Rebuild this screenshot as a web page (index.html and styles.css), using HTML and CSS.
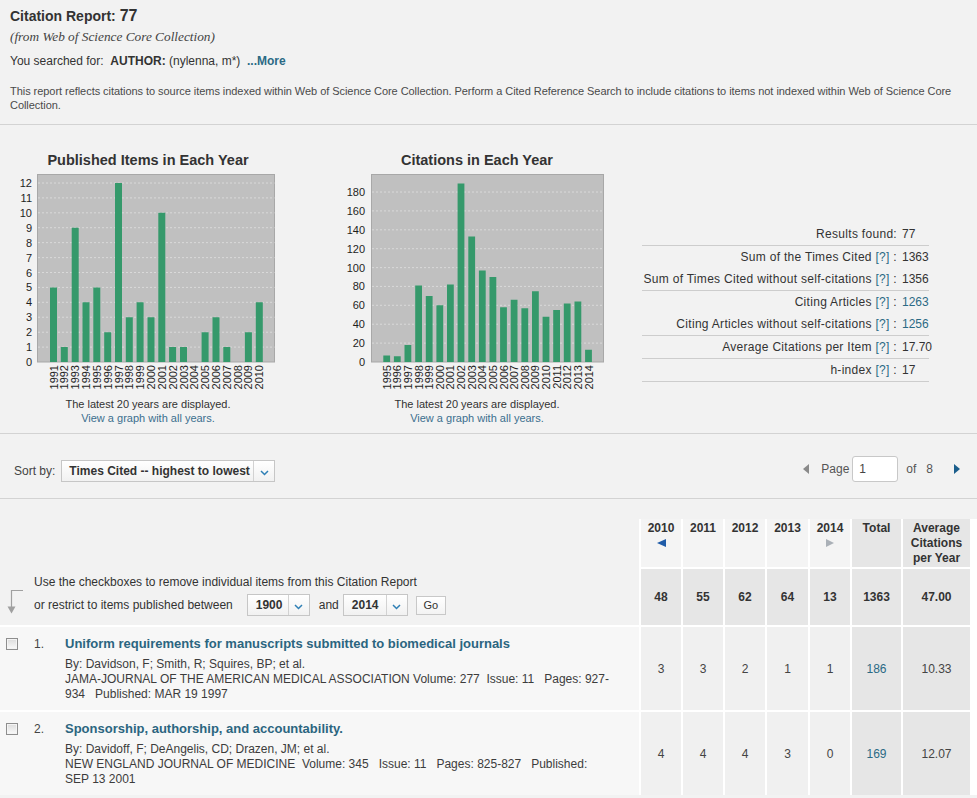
FILE: index.html
```html
<!DOCTYPE html>
<html lang="en">
<head>
<meta charset="utf-8">
<title>Citation Report</title>
<link rel="stylesheet" href="styles.css">
</head>
<body>
<div class="header">
  <h1 class="title">Citation Report: <span class="count">77</span></h1>
  <div class="source">(from Web of Science Core Collection)</div>
  <div class="searched">You searched for:&nbsp; <b>AUTHOR:</b> (nylenna, m*)&nbsp; <a class="more">...More</a></div>
  <p class="desc">This report reflects citations to source items indexed within Web of Science Core Collection. Perform a Cited Reference Search to include citations to items not indexed within Web of Science Core Collection.</p>
</div>

<div class="charts">
  <div class="chart">
    <div class="chart-title">Published Items in Each Year</div>
    <svg class="plot" width="296" height="226" viewBox="0 0 296 226">
      <rect x="37.5" y="6.5" width="237" height="187.5" fill="#c0c0c0" stroke="#a8a8a8"/>
      <path d="M38 179.1H274.5M38 164.2H274.5M38 149.2H274.5M38 134.3H274.5M38 119.4H274.5M38 104.5H274.5M38 89.6H274.5M38 74.6H274.5M38 59.7H274.5M38 44.8H274.5M38 29.9H274.5M38 15H274.5" stroke="#d9d9d9" stroke-dasharray="2 2"/>
      <path fill="#35996b" d="M50 194v-74.6h7v74.6zM60.8 194v-14.9h7v14.9zM71.7 194v-134.3h7v134.3zM82.5 194v-59.7h7v59.7zM93.3 194v-74.6h7v74.6zM104.2 194v-29.8h7v29.8zM115 194v-179h7v179zM125.8 194v-44.8h7v44.8zM136.6 194v-59.7h7v59.7zM147.5 194v-44.8h7v44.8zM158.3 194v-149.2h7v149.2zM169.1 194v-14.9h7v14.9zM180 194v-14.9h7v14.9zM201.6 194v-29.8h7v29.8zM212.5 194v-44.8h7v44.8zM223.3 194v-14.9h7v14.9zM244.9 194v-29.8h7v29.8zM255.8 194v-59.7h7v59.7z"/>
      <g class="ylab" text-anchor="end">
        <text x="32" y="198">0</text><text x="32" y="183.1">1</text><text x="32" y="168.2">2</text><text x="32" y="153.2">3</text><text x="32" y="138.3">4</text><text x="32" y="123.4">5</text><text x="32" y="108.5">6</text><text x="32" y="93.6">7</text><text x="32" y="78.6">8</text><text x="32" y="63.7">9</text><text x="32" y="48.8">10</text><text x="32" y="33.9">11</text><text x="32" y="19">12</text>
      </g>
      <g class="xlab" text-anchor="end">
        <text transform="translate(57.5 197) rotate(-90)">1991</text>
        <text transform="translate(68.3 197) rotate(-90)">1992</text>
        <text transform="translate(79.2 197) rotate(-90)">1993</text>
        <text transform="translate(90 197) rotate(-90)">1994</text>
        <text transform="translate(100.8 197) rotate(-90)">1995</text>
        <text transform="translate(111.7 197) rotate(-90)">1996</text>
        <text transform="translate(122.5 197) rotate(-90)">1997</text>
        <text transform="translate(133.3 197) rotate(-90)">1998</text>
        <text transform="translate(144.1 197) rotate(-90)">1999</text>
        <text transform="translate(155 197) rotate(-90)">2000</text>
        <text transform="translate(165.8 197) rotate(-90)">2001</text>
        <text transform="translate(176.6 197) rotate(-90)">2002</text>
        <text transform="translate(187.5 197) rotate(-90)">2003</text>
        <text transform="translate(198.3 197) rotate(-90)">2004</text>
        <text transform="translate(209.1 197) rotate(-90)">2005</text>
        <text transform="translate(220 197) rotate(-90)">2006</text>
        <text transform="translate(230.8 197) rotate(-90)">2007</text>
        <text transform="translate(241.6 197) rotate(-90)">2008</text>
        <text transform="translate(252.4 197) rotate(-90)">2009</text>
        <text transform="translate(263.3 197) rotate(-90)">2010</text>
      </g>
    </svg>
    <div class="caption">The latest 20 years are displayed.</div>
    <a class="caption-link">View a graph with all years.</a>
  </div>

  <div class="chart">
    <div class="chart-title">Citations in Each Year</div>
    <svg class="plot" width="296" height="226" viewBox="0 0 296 226">
      <rect x="42.5" y="6.5" width="232" height="187.5" fill="#c0c0c0" stroke="#a8a8a8"/>
      <path d="M43 175.1H274.5M43 156.2H274.5M43 137.3H274.5M43 118.4H274.5M43 99.6H274.5M43 80.7H274.5M43 61.8H274.5M43 42.9H274.5M43 24H274.5" stroke="#d9d9d9" stroke-dasharray="2 2"/>
      <path fill="#35996b" d="M54.3 194v-6.6h6.8v6.6zM64.9 194v-5.7h6.8v5.7zM75.5 194v-17h6.8v17zM86.2 194v-76.5h6.8v76.5zM96.8 194v-66.1h6.8v66.1zM107.4 194v-56.7h6.8v56.7zM118 194v-77.4h6.8v77.4zM128.6 194v-178.5h6.8v178.5zM139.3 194v-125.6h6.8v125.6zM149.9 194v-91.6h6.8v91.6zM160.5 194v-85h6.8v85zM171.1 194v-54.8h6.8v54.8zM181.7 194v-62.3h6.8v62.3zM192.4 194v-53.8h6.8v53.8zM203 194v-70.8h6.8v70.8zM213.6 194v-45.3h6.8v45.3zM224.2 194v-51.9h6.8v51.9zM234.8 194v-58.6h6.8v58.6zM245.5 194v-60.4h6.8v60.4zM256.1 194v-12.3h6.8v12.3z"/>
      <g class="ylab" text-anchor="end">
        <text x="36" y="198">0</text><text x="36" y="179.1">20</text><text x="36" y="160.2">40</text><text x="36" y="141.3">60</text><text x="36" y="122.4">80</text><text x="36" y="103.6">100</text><text x="36" y="84.7">120</text><text x="36" y="65.8">140</text><text x="36" y="46.9">160</text><text x="36" y="28">180</text>
      </g>
      <g class="xlab" text-anchor="end">
        <text transform="translate(61.7 197) rotate(-90)">1995</text>
        <text transform="translate(72.3 197) rotate(-90)">1996</text>
        <text transform="translate(82.9 197) rotate(-90)">1997</text>
        <text transform="translate(93.6 197) rotate(-90)">1998</text>
        <text transform="translate(104.2 197) rotate(-90)">1999</text>
        <text transform="translate(114.8 197) rotate(-90)">2000</text>
        <text transform="translate(125.4 197) rotate(-90)">2001</text>
        <text transform="translate(136 197) rotate(-90)">2002</text>
        <text transform="translate(146.7 197) rotate(-90)">2003</text>
        <text transform="translate(157.3 197) rotate(-90)">2004</text>
        <text transform="translate(167.9 197) rotate(-90)">2005</text>
        <text transform="translate(178.5 197) rotate(-90)">2006</text>
        <text transform="translate(189.1 197) rotate(-90)">2007</text>
        <text transform="translate(199.8 197) rotate(-90)">2008</text>
        <text transform="translate(210.4 197) rotate(-90)">2009</text>
        <text transform="translate(221 197) rotate(-90)">2010</text>
        <text transform="translate(231.6 197) rotate(-90)">2011</text>
        <text transform="translate(242.2 197) rotate(-90)">2012</text>
        <text transform="translate(252.9 197) rotate(-90)">2013</text>
        <text transform="translate(263.5 197) rotate(-90)">2014</text>
      </g>
    </svg>
    <div class="caption">The latest 20 years are displayed.</div>
    <a class="caption-link">View a graph with all years.</a>
  </div>

  <div class="stats">
    <div class="grp">
      <div class="srow"><span class="lbl">Results found:</span><span class="num">77</span></div>
    </div>
    <div class="grp">
      <div class="srow"><span class="lbl">Sum of the Times Cited <a>[?]</a> :</span><span class="num">1363</span></div>
      <div class="srow"><span class="lbl">Sum of Times Cited without self-citations <a>[?]</a> :</span><span class="num">1356</span></div>
    </div>
    <div class="grp">
      <div class="srow"><span class="lbl">Citing Articles <a>[?]</a> :</span><a class="num">1263</a></div>
      <div class="srow"><span class="lbl">Citing Articles without self-citations <a>[?]</a> :</span><a class="num">1256</a></div>
    </div>
    <div class="grp">
      <div class="srow"><span class="lbl">Average Citations per Item <a>[?]</a> :</span><span class="num">17.70</span></div>
    </div>
    <div class="grp">
      <div class="srow"><span class="lbl">h-index <a>[?]</a> :</span><span class="num">17</span></div>
    </div>
  </div>
</div>

<div class="sortbar">
  <span class="sort-label">Sort by:</span>
  <div class="select sort-select">
    <span class="sel-text">Times Cited -- highest to lowest</span>
    <span class="sel-btn"><svg width="9" height="6" viewBox="0 0 9 6"><path d="M1 1l3.5 3.5L8 1" fill="none" stroke="#2e7fb5" stroke-width="1.5"/></svg></span>
  </div>
  <div class="pager">
    <span class="tri-left"></span>
    <span class="page-lbl">Page</span>
    <span class="page-input">1</span>
    <span class="page-of">of&nbsp;&nbsp; 8</span>
    <span class="tri-right"></span>
  </div>
</div>

<div class="report">
  <div class="filter">
    <svg class="down-arrow" width="22" height="28" viewBox="0 0 22 28"><path d="M20 2.5H8.5V19" fill="none" stroke="#a0a0a0" stroke-width="1.2"/><path d="M4.5 18.5h8l-4 7z" fill="#a0a0a0"/></svg>
    <div class="filter-text">
      <div class="filter-line">Use the checkboxes to remove individual items from this Citation Report</div>
      <div class="filter-line restrict">or restrict to items published between
        <span class="select yr-select one"><span class="sel-text">1900</span><span class="sel-btn"><svg width="9" height="6" viewBox="0 0 9 6"><path d="M1 1l3.5 3.5L8 1" fill="none" stroke="#2e7fb5" stroke-width="1.5"/></svg></span></span>
        <span class="and">and</span>
        <span class="select yr-select two"><span class="sel-text">2014</span><span class="sel-btn"><svg width="9" height="6" viewBox="0 0 9 6"><path d="M1 1l3.5 3.5L8 1" fill="none" stroke="#2e7fb5" stroke-width="1.5"/></svg></span></span>
        <span class="go">Go</span>
      </div>
    </div>
  </div>
  <div class="yh">2010<span class="arr-left"></span></div>
  <div class="yh">2011</div>
  <div class="yh">2012</div>
  <div class="yh">2013</div>
  <div class="yh">2014<span class="arr-right"></span></div>
  <div class="yh dark">Total</div>
  <div class="yh dark">Average Citations per Year</div>

  <div class="tot">48</div>
  <div class="tot">55</div>
  <div class="tot">62</div>
  <div class="tot">64</div>
  <div class="tot">13</div>
  <div class="tot">1363</div>
  <div class="tot">47.00</div>

  <div class="item">
    <span class="cbox"></span>
    <span class="inum">1.</span>
    <div class="ibody">
      <a class="ititle">Uniform requirements for manuscripts submitted to biomedical journals</a>
      <div class="iline">By: Davidson, F; Smith, R; Squires, BP; et al.</div>
      <div class="iline">JAMA-JOURNAL OF THE AMERICAN MEDICAL ASSOCIATION Volume: 277&nbsp; Issue: 11&nbsp;&nbsp; Pages: 927-<wbr>934&nbsp;&nbsp; Published: MAR 19 1997</div>
    </div>
  </div>
  <div class="cell">3</div>
  <div class="cell">3</div>
  <div class="cell">2</div>
  <div class="cell">1</div>
  <div class="cell">1</div>
  <div class="cell dark"><a>186</a></div>
  <div class="cell dark">10.33</div>

  <div class="item">
    <span class="cbox"></span>
    <span class="inum">2.</span>
    <div class="ibody">
      <a class="ititle">Sponsorship, authorship, and accountability.</a>
      <div class="iline">By: Davidoff, F; DeAngelis, CD; Drazen, JM; et al.</div>
      <div class="iline">NEW ENGLAND JOURNAL OF MEDICINE&nbsp; Volume: 345&nbsp;&nbsp; Issue: 11&nbsp;&nbsp; Pages: 825-827&nbsp;&nbsp; Published: SEP 13 2001</div>
    </div>
  </div>
  <div class="cell">4</div>
  <div class="cell">4</div>
  <div class="cell">4</div>
  <div class="cell">3</div>
  <div class="cell">0</div>
  <div class="cell dark"><a>169</a></div>
  <div class="cell dark">12.07</div>
</div>
</body>
</html>
```

FILE: styles.css
```css
* { box-sizing: border-box; }

body {
  margin: 0;
  background: #f2f2f2;
  font-family: "Liberation Sans", Arial, sans-serif;
  color: #333;
}

a { color: #2b6a85; text-decoration: none; }

/* ---------- header ---------- */
.header {
  height: 125px;
  padding: 6px 10px 0;
  border-bottom: 1px solid #d3d3d3;
}
.title {
  margin: 0;
  font-size: 14px;
  font-weight: bold;
  line-height: 20px;
  color: #333;
}
.title .count { font-size: 16px; }
.source {
  margin-top: 1px;
  font-family: "Liberation Serif", serif;
  font-style: italic;
  font-size: 13.3px;
  line-height: 20px;
  color: #444;
}
.searched {
  margin-top: 4px;
  font-size: 12px;
  line-height: 20px;
  color: #333;
}
.searched .more { font-weight: bold; }
.desc {
  margin: 13px 0 0;
  font-size: 11px;
  line-height: 14px;
  letter-spacing: -0.05px;
  color: #4a4a4a;
}

/* ---------- charts ---------- */
.charts {
  display: flex;
  height: 309px;
  border-bottom: 1px solid #d3d3d3;
}
.chart {
  width: 296px;
  padding-top: 27px;
  text-align: center;
}
.chart + .chart { margin-left: 33px; }
.chart-title {
  font-size: 14.5px;
  font-weight: bold;
  line-height: 16px;
  color: #333;
}
.plot { display: block; }
.plot text {
  font-family: "Liberation Sans", Arial, sans-serif;
  font-size: 11px;
  fill: #1e1e1e;
}
.caption {
  margin-top: 3px;
  font-size: 11px;
  line-height: 14px;
  color: #333;
}
.caption-link {
  display: block;
  font-size: 11px;
  line-height: 14px;
  color: #3b6f8e;
}

.stats {
  width: 287px;
  margin-left: 17px;
  margin-top: 98px;
  align-self: flex-start;
  font-size: 12px;
  color: #333;
}
.grp { border-bottom: 1px solid #cdcdcd; }
.srow {
  display: grid;
  grid-template-columns: 255px 27px;
  column-gap: 5px;
  height: 22px;
  line-height: 22px;
}
.srow .lbl {
  text-align: right;
  white-space: nowrap;
  letter-spacing: 0.3px;
}
.srow .num { white-space: nowrap; }

/* ---------- sort bar ---------- */
.sortbar {
  display: flex;
  align-items: flex-start;
  height: 65px;
  padding: 26px 17px 0 14px;
  border-bottom: 1px solid #d3d3d3;
}
.sort-label {
  font-size: 12px;
  line-height: 22px;
  color: #444;
  margin-right: 6px;
}
.select {
  display: inline-flex;
  height: 22px;
  border: 1px solid #c6c6c6;
  background: linear-gradient(#ffffff, #f1f1f1);
  vertical-align: middle;
}
.sort-select { width: 214px; }
.sel-text {
  flex: 1;
  padding-left: 7px;
  font-size: 12px;
  font-weight: bold;
  line-height: 20px;
  color: #333;
  white-space: nowrap;
}
.sel-btn {
  width: 21px;
  border-left: 1px solid #d2d2d2;
  display: flex;
  align-items: center;
  justify-content: center;
  padding-top: 3px;
}
.pager {
  margin-left: auto;
  margin-top: -4px;
  height: 26px;
  display: flex;
  align-items: center;
  font-size: 12px;
  color: #555;
}
.tri-left {
  width: 0; height: 0;
  border-top: 5px solid transparent;
  border-bottom: 5px solid transparent;
  border-right: 6px solid #8a8a8a;
  margin-right: 12px;
}
.page-input {
  width: 46px;
  height: 26px;
  margin-left: 3px;
  padding-left: 6px;
  border: 1px solid #c8c8c8;
  border-radius: 3px;
  background: #fff;
  line-height: 24px;
  color: #444;
}
.page-of { margin-left: 8px; }
.tri-right {
  width: 0; height: 0;
  border-top: 5.5px solid transparent;
  border-bottom: 5.5px solid transparent;
  border-left: 6px solid #1b5e8c;
  margin-left: 21px;
}

/* ---------- report table ---------- */
.report {
  display: grid;
  grid-template-columns: 639px 40px 40px 40px 41px 40px 49px 67px;
  grid-template-rows: 48px 56px auto auto;
  gap: 2px;
  margin-top: 20px;
  background: #fff;
}
.filter {
  grid-row: 1 / span 2;
  background: #f2f2f2;
  display: flex;
  align-items: flex-end;
  padding: 0 0 9px 3px;
}
.down-arrow { margin-right: 9px; flex: none; }
.filter-text { font-size: 12px; color: #333; }
.filter-line { line-height: 16px; }
.restrict {
  margin-top: 4px;
  display: flex;
  align-items: center;
  height: 22px;
  line-height: 22px;
}
.yr-select { height: 22px; margin-left: 14px; }
.yr-select.one { width: 63px; }
.yr-select.two { width: 65px; margin-left: 4px; }
.yr-select .sel-text { padding-left: 8px; }
.and { margin-left: 9px; }
.go {
  margin-left: 8px;
  width: 30px;
  height: 19px;
  border: 1px solid #c8c8c8;
  background: linear-gradient(#ffffff, #f3f3f3);
  font-size: 11px;
  line-height: 17px;
  text-align: center;
  color: #333;
}

.yh {
  background: #f4f4f4;
  text-align: center;
  font-size: 12px;
  font-weight: bold;
  line-height: 15px;
  padding-top: 2px;
  color: #333;
}
.yh.dark { background: #e6e6e6; }
.arr-left, .arr-right {
  display: block;
  width: 0; height: 0;
  margin: 3px auto 0;
  border-top: 4px solid transparent;
  border-bottom: 4px solid transparent;
}
.arr-left { border-right: 9px solid #1f5ca8; }
.arr-right { border-left: 8px solid #aab0b7; }

.tot {
  background: #e6e6e6;
  display: flex;
  align-items: center;
  justify-content: center;
  font-size: 12px;
  font-weight: bold;
  color: #333;
}

.item {
  background: #f7f7f7;
  display: flex;
  align-items: flex-start;
  padding: 8px 0 8px 6px;
}
.cbox {
  flex: none;
  width: 12px;
  height: 12px;
  margin-top: 3px;
  margin-right: 16px;
  border: 1px solid #8e8e8e;
  background: linear-gradient(#dcdcdc, #fafafa);
  box-shadow: inset 0 0 0 1px #f4f4f4;
}
.inum {
  flex: none;
  width: 31px;
  font-size: 12px;
  line-height: 18px;
  color: #444;
}
.ibody { width: 546px; }
.ititle {
  display: block;
  font-size: 13px;
  font-weight: bold;
  line-height: 18px;
  color: #2b6580;
  margin-bottom: 4px;
}
.iline {
  font-size: 12px;
  line-height: 15px;
  color: #3c3c3c;
}
.cell {
  background: #f0f0f0;
  display: flex;
  align-items: center;
  justify-content: center;
  font-size: 12px;
  color: #444;
}
.cell.dark { background: #e6e6e6; }
.cell a { color: #2b6a85; }
```
